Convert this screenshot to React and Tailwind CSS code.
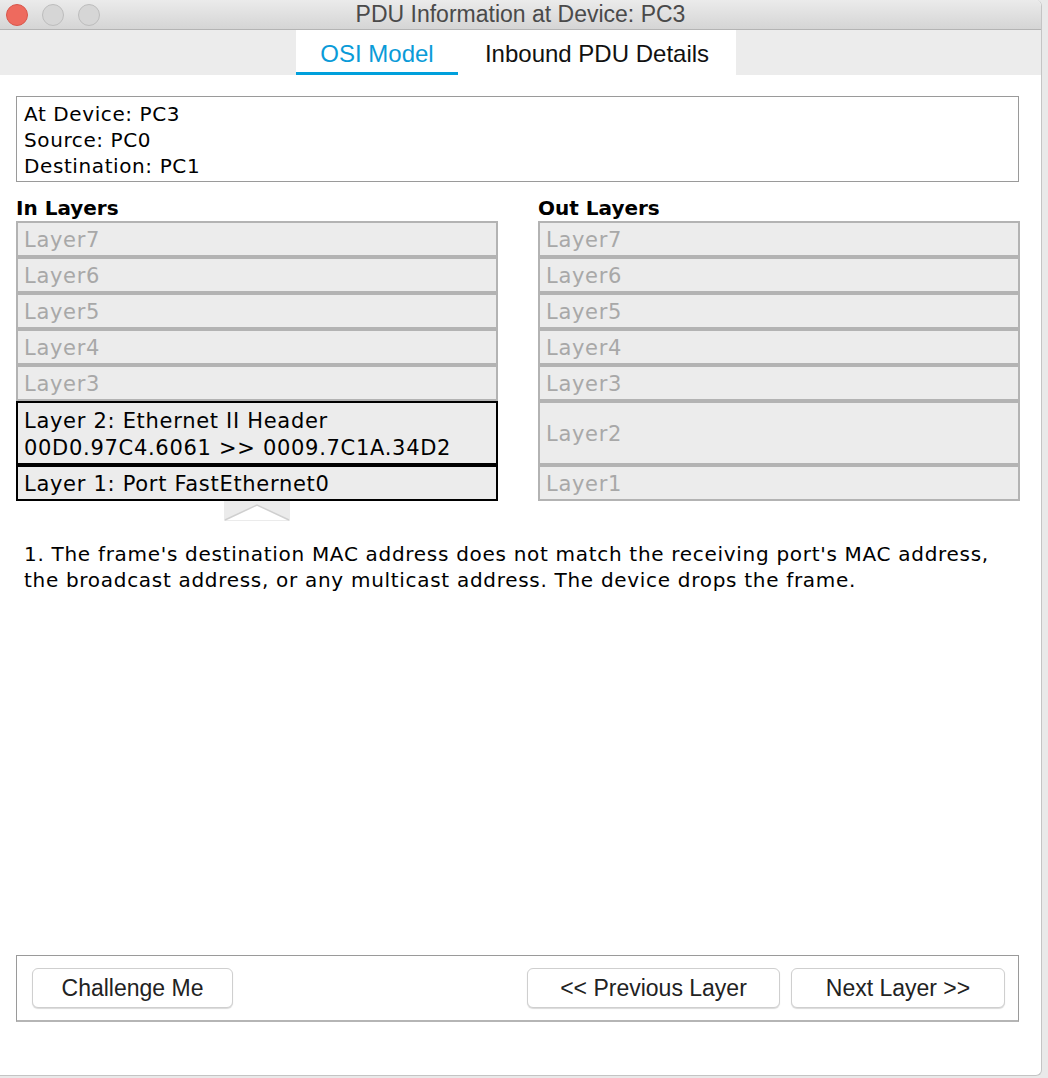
import React from 'react';

const IN_LAYERS = ['Layer7', 'Layer6', 'Layer5', 'Layer4', 'Layer3'];
const OUT_LAYERS = ['Layer7', 'Layer6', 'Layer5', 'Layer4', 'Layer3'];

const body = { fontFamily: '"DejaVu Sans", "Liberation Sans", sans-serif' };
const sys = { fontFamily: '"Liberation Sans", Arial, sans-serif' };

function Dot({ red }) {
  return red ? (
    <div className="w-[22px] h-[22px] rounded-full bg-[#ee6a5e] border border-[#d8564b]" />
  ) : (
    <div className="w-[22px] h-[22px] rounded-full bg-[#d6d6d6] border border-[#bdbdbd]" />
  );
}

function GrayLayer({ label, tall }) {
  return (
    <div className={`${tall ? 'h-[64px]' : 'h-[36px]'} border-2 border-[#b3b3b3] bg-[#ececec] flex items-center px-[6px] pt-[3px] text-[21px] tracking-[0.7px] text-[#a8a8a8]`}>
      {label}
    </div>
  );
}

function Btn({ children, w }) {
  return (
    <button className={`${w} h-[40px] rounded-[6px] bg-white border border-[#cfcfcf] shadow-[0_1px_1px_rgba(0,0,0,0.15)] text-[23px] text-[#222]`} style={sys}>
      {children}
    </button>
  );
}

export default function App() {
  return (
    <div className="w-[1048px] h-[1078px] bg-[#e9e9e9] flex" style={body}>
      <div className="w-[1042px] h-[1076px] bg-white rounded-br-[6px] rounded-tr-[6px] border-r border-b border-[#c4c4c4] flex flex-col overflow-hidden">
        {/* title bar */}
        <div className="h-[30px] shrink-0 bg-gradient-to-b from-[#ebebeb] to-[#d5d5d5] border-b border-[#b4b4b4] flex items-center relative">
          <div className="flex gap-[14px] pl-[6px]">
            <Dot red />
            <Dot />
            <Dot />
          </div>
          <div className="absolute inset-0 flex items-center justify-center text-[23px] text-[#4a4a4a]" style={sys}>
            PDU Information at Device: PC3
          </div>
        </div>

        {/* tabs */}
        <div className="h-[45px] shrink-0 bg-[#ececec] flex pl-[296px]">
          <div className="w-[162px] bg-white flex flex-col">
            <div className="flex-1 flex items-center justify-center pt-[6px] text-[24px] text-[#0a9bd8]" style={sys}>OSI Model</div>
            <div className="h-[9px] bg-[#00a0dc]" />
          </div>
          <div className="w-[278px] bg-white flex items-center justify-center pt-[3px] text-[24px] text-[#111]" style={sys}>
            Inbound PDU Details
          </div>
        </div>

        <div className="flex-1 flex flex-col px-[16px] pt-[21px] pb-[53px]">
          {/* info */}
          <div className="h-[86px] border border-[#9a9a9a] px-[7px] pt-[4px] text-[20px] tracking-[0.6px] leading-[26px] text-black mr-[6px]">
            <div>At Device: PC3</div>
            <div>Source: PC0</div>
            <div>Destination: PC1</div>
          </div>

          {/* layers */}
          <div className="flex gap-[40px] mt-[14px]">
            <div className="w-[482px] flex flex-col">
              <div className="h-[25px] font-bold text-[20px] text-black leading-[25px]">In Layers</div>
              <div className="flex flex-col">
                {IN_LAYERS.map((l) => <GrayLayer key={l} label={l} />)}
                <div className="h-[64px] border-2 border-black bg-[#ececec] px-[6px] pt-[5px] text-[21px] tracking-[0.7px] leading-[27px] text-black">
                  <div>Layer 2: Ethernet II Header</div>
                  <div>00D0.97C4.6061 &gt;&gt; 0009.7C1A.34D2</div>
                </div>
                <div className="h-[36px] border-2 border-black bg-[#ececec] flex items-center px-[6px] pt-[3px] text-[21px] tracking-[0.7px] text-black">
                  Layer 1: Port FastEthernet0
                </div>
                <div className="pl-[208px]">
                  <svg width="66" height="20" viewBox="0 0 66 20">
                    <rect x="0" y="0" width="66" height="20" fill="#ebebeb" />
                    <path d="M1 19 L33 4 L65 19 Z" fill="#ffffff" />
                    <path d="M1 19 L33 4 L65 19" fill="none" stroke="#cfcfcf" strokeWidth="1.5" />
                  </svg>
                </div>
              </div>
            </div>
            <div className="w-[482px] flex flex-col">
              <div className="h-[25px] font-bold text-[20px] text-black leading-[25px]">Out Layers</div>
              <div className="flex flex-col">
                {OUT_LAYERS.map((l) => <GrayLayer key={l} label={l} />)}
                <GrayLayer label="Layer2" tall />
                <GrayLayer label="Layer1" />
              </div>
            </div>
          </div>

          {/* message */}
          <div className="mt-[20px] px-[8px] text-[20px] tracking-[0.7px] leading-[26px] text-black">
            <div>1. The frame's destination MAC address does not match the receiving port's MAC address,</div>
            <div>the broadcast address, or any multicast address. The device drops the frame.</div>
          </div>

          <div className="flex-1" />

          {/* buttons */}
          <div className="h-[67px] border border-[#9a9a9a] border-b-2 border-b-[#b5b5b5] flex items-center pl-[15px] pr-[13px] mr-[6px]">
            <Btn w="w-[201px]">Challenge Me</Btn>
            <div className="flex-1" />
            <Btn w="w-[253px]">&lt;&lt; Previous Layer</Btn>
            <div className="w-[11px]" />
            <Btn w="w-[214px]">Next Layer &gt;&gt;</Btn>
          </div>
        </div>
      </div>
    </div>
  );
}
